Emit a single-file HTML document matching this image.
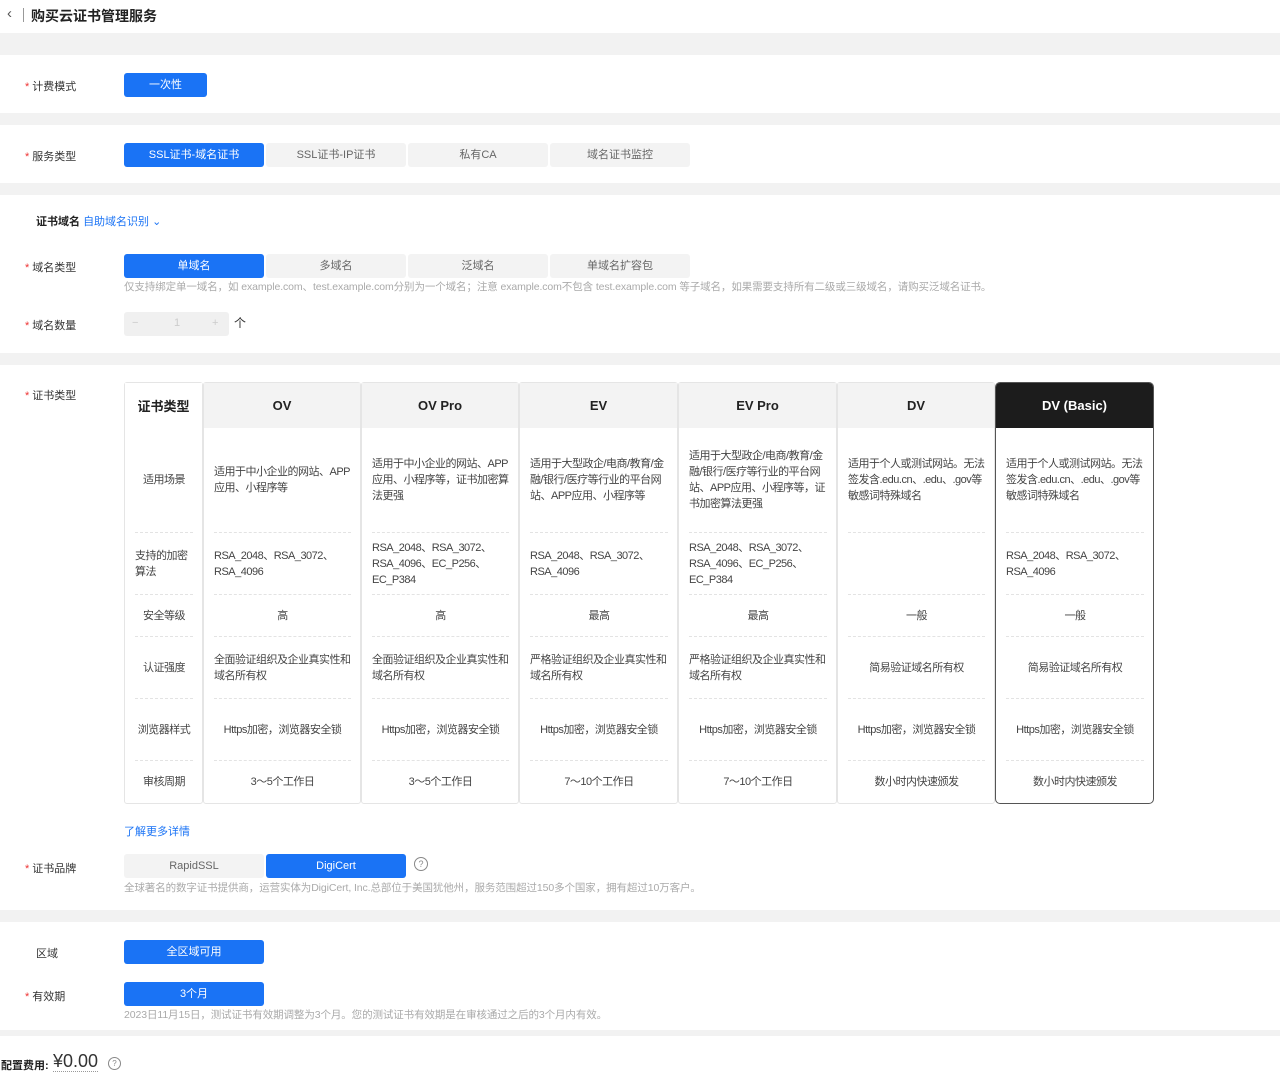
<!DOCTYPE html>
<html><head><meta charset="utf-8"><style>
*{margin:0;padding:0;box-sizing:border-box}
body{width:1280px;height:1080px;background:#fff;font-family:"Liberation Sans","Noto Sans CJK SC",sans-serif;font-size:11px;color:#333;position:relative;overflow:hidden}
.a{position:absolute}
.gray{position:absolute;left:0;width:1280px;background:#f2f2f2}
.lbl{position:absolute;left:25px;font-size:11px;color:#333}
.lbl i{color:#e33;font-style:normal;margin-right:3px}
.btn{position:absolute;height:24px;line-height:24px;text-align:center;font-size:11px;border-radius:3px}
.on{background:#1a73f5;color:#fff}
.off{background:#f3f3f3;color:#666}
.tip{position:absolute;left:124px;font-size:10.5px;color:#aaa;white-space:nowrap;letter-spacing:-0.1px}
.col{position:absolute;top:382px;height:422px;border:1px solid #e5e5e5;border-radius:3px;background:#fff}
.col .h{height:45px;background:#f3f3f3;font-weight:bold;font-size:13px;color:#222;display:flex;align-items:center;justify-content:center}
.col .c{margin:0 9px 0 10px;border-bottom:1px dashed #e3e3e3;display:flex;align-items:center;line-height:16px;font-size:11px;color:#444;letter-spacing:-0.5px}
.col .c:last-child{border-bottom:none}
.cen{justify-content:center;text-align:center}
.r1{height:105px}.r2{height:62px}.r3{height:42px}.r4{height:62px}.r5{height:62px}.r6{height:42px}
</style></head><body>
<div class="a" style="left:7px;top:5px;font-size:15px;color:#555">‹</div>
<div class="a" style="left:23px;top:8px;width:1px;height:14px;background:#999"></div>
<div class="a" style="left:31px;top:6px;font-size:14px;font-weight:bold;color:#222">购买云证书管理服务</div>

<div class="gray" style="top:33px;height:22px"></div>
<div class="gray" style="top:113px;height:12px"></div>
<div class="gray" style="top:183px;height:12px"></div>
<div class="gray" style="top:353px;height:12px"></div>
<div class="gray" style="top:910px;height:12px"></div>
<div class="gray" style="top:1030px;height:6px"></div>

<div class="lbl" style="top:78px"><i>*</i>计费模式</div>
<div class="btn on" style="left:124px;top:73px;width:83px">一次性</div>

<div class="lbl" style="top:148px"><i>*</i>服务类型</div>
<div class="btn on" style="left:124px;top:143px;width:140px">SSL证书-域名证书</div>
<div class="btn off" style="left:266px;top:143px;width:140px">SSL证书-IP证书</div>
<div class="btn off" style="left:408px;top:143px;width:140px">私有CA</div>
<div class="btn off" style="left:550px;top:143px;width:140px">域名证书监控</div>

<div class="a" style="left:36px;top:213px;font-weight:bold;color:#222">证书域名 <span style="color:#1a73f5;font-weight:normal">自助域名识别 ⌄</span></div>

<div class="lbl" style="top:259px"><i>*</i>域名类型</div>
<div class="btn on" style="left:124px;top:254px;width:140px">单域名</div>
<div class="btn off" style="left:266px;top:254px;width:140px">多域名</div>
<div class="btn off" style="left:408px;top:254px;width:140px">泛域名</div>
<div class="btn off" style="left:550px;top:254px;width:140px">单域名扩容包</div>
<div class="tip" style="top:279px">仅支持绑定单一域名，如 example.com、test.example.com分别为一个域名；注意 example.com不包含 test.example.com 等子域名，如果需要支持所有二级或三级域名，请购买泛域名证书。</div>

<div class="lbl" style="top:317px"><i>*</i>域名数量</div>
<div class="a" style="left:124px;top:312px;width:105px;height:24px;background:#f0f0f0;border-radius:3px;color:#ccc;font-size:11px">
<span class="a" style="left:8px;top:5px">−</span><span class="a" style="left:50px;top:5px">1</span><span class="a" style="left:88px;top:5px">+</span></div>
<div class="a" style="left:234px;top:314px;font-size:12px">个</div>

<div class="lbl" style="top:387px"><i>*</i>证书类型</div>

<div class="col" style="left:124px;width:79px">
<div class="h" style="background:#fff">证书类型</div>
<div class="c cen r1">适用场景</div><div class="c r2">支持的加密算法</div><div class="c cen r3">安全等级</div><div class="c cen r4">认证强度</div><div class="c cen r5">浏览器样式</div><div class="c cen r6">审核周期</div>
</div>
<div class="col" style="left:203px;width:158px">
<div class="h">OV</div>
<div class="c r1">适用于中小企业的网站、APP应用、小程序等</div><div class="c r2">RSA_2048、RSA_3072、RSA_4096</div><div class="c cen r3">高</div><div class="c r4">全面验证组织及企业真实性和域名所有权</div><div class="c cen r5">Https加密，浏览器安全锁</div><div class="c cen r6">3～5个工作日</div>
</div>
<div class="col" style="left:361px;width:158px">
<div class="h">OV Pro</div>
<div class="c r1">适用于中小企业的网站、APP应用、小程序等，证书加密算法更强</div><div class="c r2">RSA_2048、RSA_3072、RSA_4096、EC_P256、EC_P384</div><div class="c cen r3">高</div><div class="c r4">全面验证组织及企业真实性和域名所有权</div><div class="c cen r5">Https加密，浏览器安全锁</div><div class="c cen r6">3～5个工作日</div>
</div>
<div class="col" style="left:519px;width:159px">
<div class="h">EV</div>
<div class="c r1">适用于大型政企/电商/教育/金融/银行/医疗等行业的平台网站、APP应用、小程序等</div><div class="c r2">RSA_2048、RSA_3072、RSA_4096</div><div class="c cen r3">最高</div><div class="c r4">严格验证组织及企业真实性和域名所有权</div><div class="c cen r5">Https加密，浏览器安全锁</div><div class="c cen r6">7～10个工作日</div>
</div>
<div class="col" style="left:678px;width:159px">
<div class="h">EV Pro</div>
<div class="c r1">适用于大型政企/电商/教育/金融/银行/医疗等行业的平台网站、APP应用、小程序等，证书加密算法更强</div><div class="c r2">RSA_2048、RSA_3072、RSA_4096、EC_P256、EC_P384</div><div class="c cen r3">最高</div><div class="c r4">严格验证组织及企业真实性和域名所有权</div><div class="c cen r5">Https加密，浏览器安全锁</div><div class="c cen r6">7～10个工作日</div>
</div>
<div class="col" style="left:837px;width:158px">
<div class="h">DV</div>
<div class="c r1">适用于个人或测试网站。无法签发含.edu.cn、.edu、.gov等敏感词特殊域名</div><div class="c r2"></div><div class="c cen r3">一般</div><div class="c cen r4">简易验证域名所有权</div><div class="c cen r5">Https加密，浏览器安全锁</div><div class="c cen r6">数小时内快速颁发</div>
</div>
<div class="col" style="left:995px;width:159px;border-color:#555;border-radius:5px">
<div class="h" style="background:#1c1c1c;color:#fff;border-radius:4px 4px 0 0">DV (Basic)</div>
<div class="c r1">适用于个人或测试网站。无法签发含.edu.cn、.edu、.gov等敏感词特殊域名</div><div class="c r2">RSA_2048、RSA_3072、RSA_4096</div><div class="c cen r3">一般</div><div class="c cen r4">简易验证域名所有权</div><div class="c cen r5">Https加密，浏览器安全锁</div><div class="c cen r6">数小时内快速颁发</div>
</div>

<div class="a" style="left:124px;top:823px;color:#1a73f5">了解更多详情</div>

<div class="lbl" style="top:860px"><i>*</i>证书品牌</div>
<div class="btn off" style="left:124px;top:854px;width:140px">RapidSSL</div>
<div class="btn on" style="left:266px;top:854px;width:140px">DigiCert</div>
<div class="a" style="left:414px;top:857px;width:14px;height:14px;border:1px solid #888;border-radius:50%;font-size:9px;text-align:center;line-height:12px;color:#888">?</div>
<div class="tip" style="top:880px">全球著名的数字证书提供商，运营实体为DigiCert, Inc.总部位于美国犹他州，服务范围超过150多个国家，拥有超过10万客户。</div>

<div class="lbl" style="top:945px;left:36px">区域</div>
<div class="btn on" style="left:124px;top:940px;width:140px">全区域可用</div>
<div class="lbl" style="top:988px"><i>*</i>有效期</div>
<div class="btn on" style="left:124px;top:982px;width:140px">3个月</div>
<div class="tip" style="top:1007px">2023日11月15日，测试证书有效期调整为3个月。您的测试证书有效期是在审核通过之后的3个月内有效。</div>

<div class="a" style="left:1px;top:1057px;font-size:11px;font-weight:bold;color:#222">配置费用:</div>
<div class="a" style="left:53px;top:1051px;font-size:18px;color:#333;border-bottom:1px dotted #999;line-height:20px">¥0.00</div>
<div class="a" style="left:108px;top:1057px;width:13px;height:13px;border:1px solid #888;border-radius:50%;font-size:8px;text-align:center;line-height:11px;color:#888">?</div>
</body></html>
